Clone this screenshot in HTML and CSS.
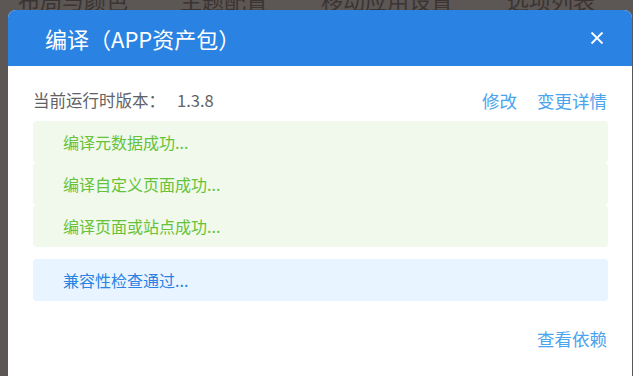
FILE: index.html
```html
<!DOCTYPE html>
<html lang="zh-CN">
<head>
    <meta charset="UTF-8">
    <meta name="viewport" content="width=device-width, initial-scale=1.0">
    <title>编译（APP资产包）</title>
    <link rel="stylesheet" href="styles.css">
</head>
<body>
    <div class="page-tabs">
        <span class="page-tab tab-layout">布局与颜色</span>
        <span class="page-tab tab-theme">主题配置</span>
        <span class="page-tab tab-mobile">移动应用设置</span>
        <span class="page-tab tab-options">选项列表</span>
    </div>

    <div class="dialog">
        <div class="dialog-header">
            <span class="dialog-title">编译（APP资产包）</span>
            <button class="dialog-close" aria-label="关闭">
                <svg width="14" height="14" viewBox="0 0 14 14">
                    <path d="M1.5 1.5 L12.5 12.5 M12.5 1.5 L1.5 12.5" stroke="#fff" stroke-width="1.8" fill="none"/>
                </svg>
            </button>
        </div>

        <div class="dialog-body">
            <div class="version-row">
                <span class="version-text">当前运行时版本：<span class="version-number">1.3.8</span></span>
                <span class="version-links">
                    <a class="link" href="#">修改</a>
                    <a class="link" href="#">变更详情</a>
                </span>
            </div>

            <div class="alert alert-success">编译元数据成功...</div>
            <div class="alert alert-success">编译自定义页面成功...</div>
            <div class="alert alert-success">编译页面或站点成功...</div>
            <div class="alert alert-info">兼容性检查通过...</div>

            <div class="dialog-footer">
                <a class="link" href="#">查看依赖</a>
            </div>
        </div>
    </div>
</body>
</html>
```

FILE: styles.css
```css
body {
    margin: 0;
    background: #5c5654;
    font-family: "Noto Sans CJK SC", "Noto Sans", sans-serif;
    overflow: hidden;
}
.page-tabs {
    height: 10px;
    overflow: hidden;
    display: flex;
    align-items: flex-end;
}
.page-tab {
    font-size: 22px;
    line-height: 22px;
    color: #3a3433;
    flex: none;
}
.tab-layout { margin-left: 18px; }
.tab-theme { margin-left: 52px; }
.tab-mobile { margin-left: 53px; }
.tab-options { margin-left: 54px; }

.dialog {
    margin-left: 8px;
    width: 624px;
    height: 366px;
    background: #fff;
    border-radius: 8px 8px 0 0;
    overflow: hidden;
}
.dialog-header {
    height: 56px;
    background: #2a82e3;
    display: flex;
    align-items: center;
    justify-content: space-between;
    padding: 0 28px 0 37px;
}
.dialog-title {
    color: #fff;
    font-size: 22px;
    line-height: 30px;
}
.dialog-close {
    border: none;
    background: none;
    padding: 0;
    width: 14px;
    height: 14px;
    display: flex;
    cursor: pointer;
}
.dialog-body {
    padding: 22px 24px 0 25px;
}
.version-row {
    display: flex;
    justify-content: space-between;
    align-items: center;
    height: 24px;
    margin-bottom: 9px;
}
.version-text {
    color: #606266;
    font-size: 16.5px;
}
.version-number {
    margin-left: 12px;
}
.version-links {
    display: flex;
    gap: 20px;
    padding-right: 1px;
}
.link {
    color: #4ba4ec;
    text-decoration: none;
    font-size: 17.5px;
}
.alert {
    height: 42px;
    line-height: 42px;
    padding-left: 30px;
    border-radius: 4px;
    font-size: 16px;
}
.alert-success {
    background: #f0f9eb;
    color: #67c23a;
}
.alert-info {
    background: #e8f4ff;
    color: #2a82e3;
    margin-top: 12px;
}
.dialog-footer {
    margin-top: 26px;
    line-height: 24px;
    text-align: right;
    padding-right: 1px;
}
```
